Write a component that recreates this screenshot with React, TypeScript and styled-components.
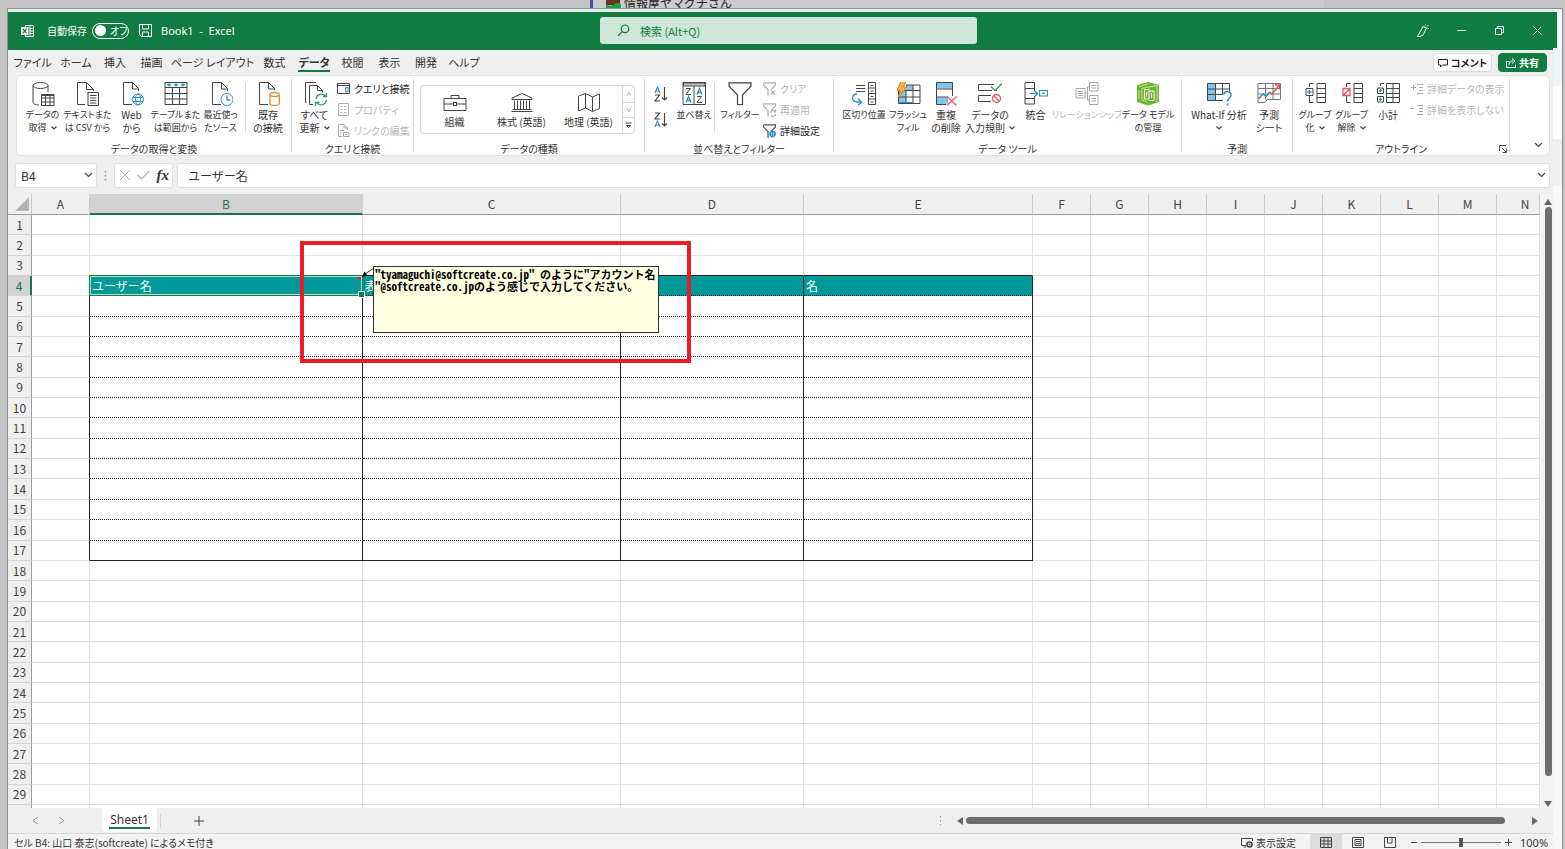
import React from "react";
import styled, { createGlobalStyle } from "styled-components";

const GREEN = "#107c41";
const INK = "#444";
const BLUE = "#2b8fd0";
const SKY = "#83c3f0";

const GlobalStyle = createGlobalStyle`
  * { box-sizing: border-box; }
  body { margin: 0; overflow: hidden; background: #c4c4c4; }
  button, input { font: inherit; color: inherit; margin: 0; padding: 0; border: 0; background: none; }
  button { white-space: nowrap; }
  svg { display: block; flex: none; }
`;

/* ---------- shell ---------- */

const Desktop = styled.div`
  height: 100vh;
  display: flex;
  flex-direction: column;
  padding: 0 2px 0 7px;
  background: #c4c4c4;
  color: #333;
  font-family: "Noto Sans CJK JP", "Noto Sans", sans-serif;
  font-size: 10px;
`;
const Behind = styled.div`
  flex: none;
  height: 8px;
  display: grid;
  grid-template-columns: 583px minmax(0, 1fr) 239px;
`;
const BehindPage = styled.div`
  display: flex;
  align-items: flex-end;
  gap: 3px;
  padding-left: 13px;
  overflow: hidden;
  border-left: 3px solid #4b4bb8;
  background: #cbcbcb;
  color: #222;
  font-size: 12px;
  line-height: 10px;
  white-space: nowrap;
`;
const Window = styled.div`
  flex: 1;
  min-height: 0;
  display: flex;
  border: 1px solid #8f8f8f;
  border-bottom: 0;
  background: #efefef;
`;
const Main = styled.div`
  flex: 1;
  min-width: 0;
  display: flex;
  flex-direction: column;
  border-top: 3px solid #e4f0e9;
`;
const Edge = styled.div`
  width: 9px;
  flex: none;
  background: #f8f8f8;
  border-top: 3px solid #f0f5f8;
`;
const EdgePart = styled.div<{ $h: number; $bg: string; $w?: number }>`
  height: ${(p) => p.$h}px;
  width: ${(p) => (p.$w ? p.$w + "px" : "100%")};
  background: ${(p) => p.$bg};
`;

/* ---------- title bar ---------- */

const TitleBar = styled.header`
  flex: none;
  height: 38px;
  display: grid;
  grid-template-columns: 592px 377px minmax(0, 1fr);
  align-items: center;
  padding-bottom: 1px;
  background: ${GREEN};
  color: #fff;
`;
const TitleLeft = styled.div`
  display: flex;
  align-items: center;
  padding-left: 13px;
  white-space: pre;
`;
const AutoSave = styled.label`
  display: flex;
  align-items: center;
  gap: 5px;
  margin: 0 10px 0 12px;
  position: relative;
  input { position: absolute; right: 0; width: 37px; height: 16px; opacity: 0; }
`;
const Switch = styled.span`
  display: flex;
  align-items: center;
  gap: 4px;
  width: 37px;
  height: 16px;
  padding-left: 2px;
  border: 1px solid #fff;
  border-radius: 8px;
  font-feature-settings: "palt";
  line-height: 14px;
  &::before { content: ""; width: 11px; height: 11px; border-radius: 50%; background: #fff; }
`;
const BookName = styled.span`
  margin-left: 9px;
  font-family: "Noto Sans", sans-serif;
  font-size: 11px;
`;
const SearchBox = styled.label`
  height: 27px;
  display: flex;
  align-items: center;
  gap: 10px;
  padding-left: 17px;
  border-radius: 3px;
  background: #cfe6da;
  color: ${GREEN};
  input { flex: 1; min-width: 0; outline: 0; font-size: 11px; }
  input::placeholder { color: ${GREEN}; opacity: 1; }
`;
const WindowButtons = styled.div`
  display: flex;
  justify-content: flex-end;
  margin-right: -3px;
  button { width: 38px; height: 37px; display: grid; place-items: center; }
`;

/* ---------- tabs ---------- */

const TabRow = styled.nav`
  flex: none;
  height: 25px;
  display: flex;
  align-items: center;
  padding: 0 6px 0 2px;
  font-size: 11px;
  font-feature-settings: "palt";
`;
const Tab = styled.button<{ $w: number; $on?: boolean }>`
  width: ${(p) => p.$w}px;
  height: 22px;
  display: flex;
  justify-content: center;
  font-weight: ${(p) => (p.$on ? 700 : 400)};
  span {
    height: 20px;
    line-height: 20px;
    border-bottom: ${(p) => (p.$on ? "2px solid " + GREEN : "0")};
  }
`;
const TabAction = styled.button<{ $primary?: boolean }>`
  height: 19px;
  width: ${(p) => (p.$primary ? 49 : 59)}px;
  margin-left: ${(p) => (p.$primary ? "6px" : "auto")};
  display: flex;
  align-items: center;
  justify-content: center;
  gap: 3px;
  border: 1px solid ${(p) => (p.$primary ? GREEN : "#dcdcdc")};
  border-radius: 4px;
  background: ${(p) => (p.$primary ? GREEN : "#fff")};
  color: ${(p) => (p.$primary ? "#fff" : "#222")};
  font-size: 10px;
  font-weight: 700;
`;

/* ---------- ribbon ---------- */

const Ribbon = styled.section`
  flex: none;
  height: 81px;
  display: flex;
  margin: 0 3px 0 8px;
  padding: 3px 0;
  border: 1px solid #e2e2e2;
  border-radius: 6px;
  background: #fff;
  font-feature-settings: "palt";
`;
const Group = styled.div<{ $w: number }>`
  width: ${(p) => p.$w}px;
  flex: none;
  display: flex;
  flex-direction: column;
  position: relative;
  border-right: 1px solid #d6d6d6;
`;
const GroupBody = styled.div<{ $pad: number }>`
  flex: 1;
  min-height: 0;
  display: flex;
  align-items: flex-start;
  padding-left: ${(p) => p.$pad}px;
  padding-top: 3px;
`;
const GroupTitle = styled.div`
  flex: none;
  height: 13px;
  margin-bottom: -3px;
  line-height: 13px;
  text-align: center;
  white-space: nowrap;
`;
const Big = styled.button<{ $w: number; $off?: boolean; $dense?: boolean }>`
  width: ${(p) => p.$w}px;
  flex: none;
  display: flex;
  flex-direction: column;
  align-items: center;
  gap: 2px;
  font-size: ${(p) => (p.$dense ? 9 : 10)}px;
  line-height: 13px;
  color: ${(p) => (p.$off ? "#b8b8b8" : "inherit")};
`;
const BigLine = styled.span`
  min-height: 13px;
  display: flex;
  align-items: center;
  justify-content: center;
  gap: 4px;
`;
const Rule = styled.div`
  width: 1px;
  height: 50px;
  margin: 0 2px;
  background: #d9d9d9;
`;
const SmallList = styled.div<{ $gap?: number }>`
  display: flex;
  flex-direction: column;
  margin-top: -1px;
  margin-left: ${(p) => p.$gap ?? 0}px;
`;
const Small = styled.button<{ $off?: boolean }>`
  height: 21px;
  flex: none;
  display: flex;
  align-items: center;
  gap: 4px;
  padding-bottom: 6px;
  color: ${(p) => (p.$off ? "#b8b8b8" : "#222")};
`;
const Gallery = styled.div`
  width: 215px;
  height: 49px;
  display: flex;
  margin-top: 3px;
  border: 1px solid #d6d6d6;
  border-radius: 4px;
`;
const GalleryItem = styled.button`
  width: 67px;
  display: flex;
  flex-direction: column;
  align-items: center;
  gap: 3px;
  padding-top: 6px;
  line-height: 13px;
`;
const GalleryScroll = styled.div`
  flex: 1;
  display: grid;
  grid-template-rows: 1fr 1fr 1fr;
  border-left: 1px solid #d6d6d6;
  button { display: grid; place-items: center; }
  button + button { border-top: 1px solid #d6d6d6; }
`;
const SortColumn = styled.div`
  width: 30px;
  display: flex;
  flex-direction: column;
  align-items: center;
  gap: 10px;
  padding-top: 4px;
`;
const Launcher = styled.button`
  position: absolute;
  right: 2px;
  bottom: -1px;
`;
const Collapse = styled.button`
  margin: auto 6px 4px auto;
`;

/* ---------- formula bar ---------- */

const FormulaRow = styled.div`
  flex: none;
  height: 38px;
  display: flex;
  align-items: center;
  padding: 0 3px 0 7px;
`;
const Field = styled.div<{ $w?: number }>`
  width: ${(p) => (p.$w ? p.$w + "px" : "auto")};
  flex: ${(p) => (p.$w ? "none" : "1")};
  height: 25px;
  display: flex;
  align-items: center;
  justify-content: space-between;
  padding: 0 3px 0 5px;
  border: 1px solid #e0e0e0;
  border-radius: 3px;
  background: #fff;
  font-size: 12px;
  input { flex: 1; min-width: 0; outline: 0; }
`;
const FormulaInput = styled.input`
  padding-left: 5px;
`;
const Dots = styled.div`
  width: 17px;
  display: grid;
  place-items: center;
`;
const FieldGap = styled.div`
  width: 4px;
`;
const Fx = styled.span`
  font-family: "Liberation Serif", serif;
  font-style: italic;
  font-weight: 700;
  font-size: 15px;
`;

/* ---------- grid ---------- */

const GridArea = styled.div`
  flex: 1;
  min-height: 0;
  display: flex;
`;
const TableWrap = styled.div`
  flex: 1;
  min-width: 0;
`;
const Sheet = styled.table`
  width: 100%;
  height: 100%;
  table-layout: fixed;
  border-collapse: separate;
  border-spacing: 0;
  background: #fff;
  font-size: 12px;
  line-height: 12px;
  th, td { padding: 0; font-weight: 400; }
  th:last-child { padding-left: 14px; }
`;
const ColHead = styled.th<{ $on?: boolean }>`
  height: 21px;
  background: ${(p) => (p.$on ? "#d2d2d2" : "#efefef")};
  color: ${(p) => (p.$on ? "#217346" : "#444")};
  border-right: 1px solid ${(p) => (p.$on ? "#d2d2d2" : "#c9c9c9")};
  border-bottom: ${(p) => (p.$on ? "2px solid #217346" : "1px solid #9b9b9b")};
  svg { margin: 0 2px 0 auto; }
`;
const RowHead = styled.th<{ $on?: boolean }>`
  background: ${(p) => (p.$on ? "#d2d2d2" : "#efefef")};
  color: ${(p) => (p.$on ? "#217346" : "#444")};
  border-right: ${(p) => (p.$on ? "2px solid #217346" : "1px solid #9b9b9b")};
  border-bottom: 1px solid #d4d4d4;
`;
const Cell = styled.td<{ $right: string; $bottom: string; $teal?: boolean }>`
  position: relative;
  border-right: 1px solid ${(p) => p.$right};
  border-bottom: ${(p) => p.$bottom};
  background: ${(p) => (p.$teal ? "#009999" : "transparent")};
  color: #fff;
  text-indent: 2px;
  white-space: nowrap;
`;
const Sliver = styled.tr`
  height: 3px;
  line-height: 0;
  th { height: 3px; border-bottom: 0; }
  td { height: 3px; border-bottom: 0; }
`;
const Selection = styled.div`
  position: absolute;
  inset: -1px;
  z-index: 1;
  border: 1px solid ${GREEN};
  box-shadow: inset 0 0 0 1px #b9dccb;
  &::before {
    content: "";
    position: absolute;
    right: 1px;
    top: 1px;
    border-top: 4px solid #e02020;
    border-left: 4px solid transparent;
  }
  &::after {
    content: "";
    position: absolute;
    right: -2px;
    bottom: -2px;
    width: 5px;
    height: 5px;
    background: ${GREEN};
    box-shadow: 0 0 0 1px #fff;
  }
`;
const Note = styled.div`
  position: absolute;
  z-index: 3;
  left: calc(100% + 11px);
  top: -10px;
  width: 286px;
  height: 67px;
  padding: 1px;
  border: 1px solid #333;
  background: #ffffe1;
  color: #000;
  font-size: 11px;
  font-weight: 700;
  line-height: 12px;
  text-indent: 0;
  font-feature-settings: "hwid";
`;
const NoteArrow = styled.svg`
  position: absolute;
  z-index: 3;
  left: 100%;
  top: -9px;
`;
const RedFrame = styled.div`
  position: absolute;
  z-index: 4;
  right: -329px;
  top: -35px;
  width: 391px;
  height: 122px;
  border: 4px solid #ed1c24;
`;
const VScroll = styled.div`
  width: 13px;
  flex: none;
  display: flex;
  flex-direction: column;
  align-items: center;
  gap: 2px;
  padding: 5px 0 1px 3px;
  background: #f3f3f3;
`;
const VThumb = styled.div`
  flex: 1;
  width: 7px;
  margin-bottom: 23px;
  border-radius: 4px;
  background: #6e6e6e;
`;

/* ---------- sheet bar and status bar ---------- */

const SheetBar = styled.div`
  flex: none;
  height: 26px;
  display: flex;
  align-items: center;
  padding-left: 24px;
  border-bottom: 1px solid #d8d8d8;
  background: #efefef;
`;
const NextSheet = styled.button`
  margin-left: 19px;
`;
const SheetTab = styled.button`
  width: 55px;
  height: 24px;
  margin: 0 3px 2px 37px;
  display: flex;
  justify-content: center;
  border-radius: 0 0 4px 4px;
  background: #fff;
  font-family: "Noto Sans", sans-serif;
  font-size: 12px;
  span { height: 21px; line-height: 23px; border-bottom: 2px solid #217346; padding: 0 1px; }
`;
const SheetRule = styled.div`
  width: 1px;
  height: 14px;
  background: #d4d4d4;
`;
const AddSheet = styled.button`
  margin-left: 33px;
`;
const HScroll = styled.div`
  width: 614px;
  margin-left: auto;
  padding-right: 15px;
  display: flex;
  align-items: center;
`;
const ScrollLeft = styled.span`
  margin-left: 15px;
`;
const HThumb = styled.div`
  flex: 1;
  height: 7px;
  margin: 0 27px 0 3px;
  border-radius: 4px;
  background: #6e6e6e;
`;
const Status = styled.footer`
  flex: none;
  height: 15px;
  display: flex;
  align-items: center;
  padding: 2px 0 0 6px;
  background: #f3f3f3;
  font-feature-settings: "palt";
  white-space: nowrap;
`;
const StatusText = styled.span`
  flex: 1;
  line-height: 13px;
`;
const Display = styled.button`
  display: flex;
  align-items: center;
  gap: 3px;
  margin-right: 14px;
  line-height: 13px;
`;
const View = styled.button<{ $on?: boolean }>`
  width: 32px;
  height: 15px;
  margin-top: -2px;
  padding-top: 2px;
  display: grid;
  place-items: center;
  background: ${(p) => (p.$on ? "#dcdcdc" : "transparent")};
`;
const Zoom = styled.div`
  display: flex;
  align-items: center;
  gap: 4px;
  margin-left: 5px;
  font-family: "Noto Sans", sans-serif;
  input {
    appearance: none;
    width: 80px;
    height: 10px;
    background: linear-gradient(#777, #777) center / 100% 1px no-repeat;
  }
  input::-webkit-slider-thumb { appearance: none; width: 4px; height: 9px; background: #555; }
`;
const Percent = styled.span`
  width: 33px;
  margin-left: 4px;
  font-size: 11px;
  line-height: 13px;
`;

/* ---------- icons ---------- */

type IconProps = { children: React.ReactNode; w?: number; h?: number; color?: string };
const Icon = ({ children, w = 24, h = 24, color = INK }: IconProps) => (
  <svg width={w} height={h} viewBox={`0 0 ${w} ${h}`} fill="none" stroke={color} strokeWidth="1" aria-hidden="true">
    {children}
  </svg>
);

const Chevron = ({ w = 9, color = INK, up = false }: { w?: number; color?: string; up?: boolean }) => (
  <Icon w={w} h={6} color={color}>
    <path d={up ? `M1 4.5 L${w / 2} 1.5 L${w - 1} 4.5` : `M1 1 L${w / 2} 4.5 L${w - 1} 1`} strokeWidth="1.2" />
  </Icon>
);
const SmallChevron = () => (
  <Icon w={6} h={4}><path d="M.5 .5 3 3 5.5 .5" strokeWidth="1.2" /></Icon>
);

const IconDatabase = () => (
  <Icon>
    <ellipse cx="9.500" cy="3.500" rx="7.500" ry="3" />
    <path d="M2 3.500V20.500C2 22 5 23 8 23M17 3.500V10" />
    <path d="M10.500 12.500H23V23.500H10.500ZM10.500 16H23M10.500 20H23M14.500 12.500V23.500M19 12.500V23.500" />
    <path d="M10.500 13H23" strokeWidth="2" />
  </Icon>
);
const IconTextDoc = () => (
  <Icon>
    <path d="M10.500 .5H1.500V22.500H9M10.500 .5 17.500 7.500V9M10.500 .5V7.500H17.500" />
    <path d="M12 10.500H22.500V23.500H12ZM14 13.500H20.500M14 16H20.500M14 18.500H20.500M14 21H20.500" />
  </Icon>
);
const IconWebDoc = () => (
  <Icon>
    <path d="M12.500 .5H3.500V22.500H12M12.500 .5 18.500 6.500V9M12.500 .5V7H18.500" />
    <g stroke={BLUE}>
      <circle cx="18" cy="17.500" r="5.500" />
      <ellipse cx="18" cy="17.500" rx="2.500" ry="5.500" />
      <path d="M13 15.500H23M13 19.500H23" />
    </g>
  </Icon>
);
const IconTableRange = () => (
  <Icon>
    <path d="M1.500 1H22.500V5H1.500Z" fill="#e9f3fb" stroke="none" />
    <path d="M1 .5H23V22.500H1ZM1 5.500H23M1 11.500H23M1 17H23M8.500 5V22.500M15.500 5V22.500" />
    <path d="M3 2H7L5 4.500ZM10 2H14L12 4.500ZM17 2H21L19 4.500Z" fill={BLUE} stroke={BLUE} strokeWidth=".5" />
  </Icon>
);
const IconRecent = () => (
  <Icon>
    <path d="M12.500 .5H3.500V22.500H12M12.500 .5 18.500 6.500V9M12.500 .5V7H18.500" />
    <circle cx="18" cy="17.500" r="6" stroke={BLUE} fill="#fff" />
    <path d="M18 13.500V18H21.500" />
  </Icon>
);
const IconExisting = () => (
  <Icon>
    <path d="M12.500 .5H3.500V22.500H12M12.500 .5 18.500 6.500V8M12.500 .5V7H18.500" />
    <g stroke="#ec8a2e" strokeWidth="1.300">
      <path d="M14 13V21.500C14 24 23.300 24 23.300 21.500V13" fill="#fff" />
      <ellipse cx="18.600" cy="12.500" rx="4.600" ry="2" fill="#fff" />
    </g>
  </Icon>
);
const IconRefresh = () => (
  <Icon w={26}>
    <path d="M4.500 20.500H3.500V.5H14M7.500 22.500V3.500H15.500M7.500 22.500H11M15.500 3.500 20.500 8.500H15.500ZM20.500 8.500V10.500" />
    <g stroke="#2aa35a" strokeWidth="1.300">
      <path d="M14 17A5.500 5.500 0 0 1 23.500 14M24.500 11V14.500H21M24.500 18A5.500 5.500 0 0 1 15 21M13.500 24V20.500H17.500" />
    </g>
  </Icon>
);
const IconQueries = () => (
  <Icon w={13} h={13}>
    <path d="M.5 1.500H12.500V11.500H.5ZM.5 3.500H12.500" />
    <path d="M8.500 5.500H11V10H8.500Z" stroke={BLUE} fill="#d9ecf9" />
  </Icon>
);
const IconProperties = () => (
  <Icon w={13} h={13} color="#b0b0b0">
    <path d="M1.500 .5H11.500V12.500H1.500ZM3.500 3.500H5.500M3.500 6.500H5.500M3.500 9.500H5.500M7 3.500H9.500M7 6.500H9.500M7 9.500H9.500" />
  </Icon>
);
const IconLinks = () => (
  <Icon w={13} h={13} color="#a8a8a8">
    <path d="M7 .5H1.500V12.500H5M7 .5 10.500 4V6M7 .5V4H10.500M3 6.500H7M3 9H5" />
    <path d="M6.500 8.500H12V12.500H6.500ZM8 10.500H10.500" />
  </Icon>
);
const IconOrg = () => (
  <Icon w={24} h={20}>
    <path d="M1 6.500H23V18.500H1ZM8 6.500V3.500H16V6.500M1 12H10M14 12H23" />
    <rect x="10.500" y="10.500" width="3" height="3" />
  </Icon>
);
const IconStock = () => (
  <Icon w={24} h={20}>
    <path d="M2 7.500V6L12 1.500 22 6V7.500ZM1.500 19.500H22.500M2.500 17.500H21.500M4.500 8.500V17M7.500 8.500V17M10.500 8.500V17M13.500 8.500V17M16.500 8.500V17M19.500 8.500V17" />
  </Icon>
);
const IconMap = () => (
  <Icon w={24} h={20}>
    <path d="M1.500 4 8.500 1.500 15.500 5 22.500 2V16.500L15.500 19.500 8.500 16 1.500 19ZM8.500 1.500V16M15.500 5V19.500" />
  </Icon>
);
const RISING = "M0 6 L2.500 0 L5 6 M1 4 H4";
const ZIGZAG = "M0 0 H4.500 L0 6 H5";
const IconSort = ({ desc = false }: { desc?: boolean }) => (
  <Icon w={14} h={16}>
    <g strokeWidth="1.200">
      <path d={desc ? ZIGZAG : RISING} transform="translate(1 1)" stroke={desc ? INK : BLUE} />
      <path d={desc ? RISING : ZIGZAG} transform="translate(1 9)" stroke={desc ? BLUE : INK} />
      <path d="M10.500 1V14M8 11.500 10.500 14 13 11.500" />
    </g>
  </Icon>
);
const IconSortDialog = () => (
  <Icon>
    <path d="M1 .5H23.500V22.500H1ZM12 4V22.500" />
    <path d="M1.500 1H23V4H1.500Z" fill="#c9c9c9" />
    <path d={ZIGZAG} transform="translate(4 6.500)" />
    <path d={RISING} transform="translate(4 14.500)" stroke={BLUE} strokeWidth="1.300" />
    <path d={RISING} transform="translate(15 6.500)" stroke={BLUE} strokeWidth="1.300" />
    <path d={ZIGZAG} transform="translate(15 14.500)" />
  </Icon>
);
const IconFilter = () => (
  <Icon><path d="M1 .8H23V4L14.500 13V22.500H9.500V13L1 4Z" strokeWidth="1.200" /></Icon>
);
const IconMiniFilter = ({ kind }: { kind: "clear" | "again" | "more" }) => (
  <Icon w={13} h={14} color={kind === "more" ? "#555" : "#b0b0b0"}>
    <path d="M.5 .8H12.500V3L8 7.500M.5 .8V3L5 7.500V13H6" strokeWidth="1.200" />
    {kind === "clear" && <path d="M8 8.500 12 12.500M12 8.500 8 12.500" strokeWidth="1.200" />}
    {kind === "again" && <path d="M7.500 10A2.600 2.600 0 0 1 12.500 9M12.500 11A2.600 2.600 0 0 1 8 12.500M12.500 6.500V9H10.500" strokeWidth="1.200" />}
    {kind === "more" && (
      <g stroke={BLUE}><circle cx="9.500" cy="10" r="2.500" strokeWidth="1.500" /><path d="M9.500 6.500V13.500M6 10H13" /></g>
    )}
  </Icon>
);
const IconTextToCols = () => (
  <Icon>
    <path d="M4 3.500H13M4 6.500H13M4 9.500H13M16.500 .5H23.500V22.500H16.500ZM16.500 6H23.500M16.500 11.500H23.500M16.500 17H23.500" />
    <path d="M18.500 3.500H21.500M18.500 9H21.500M18.500 14.500H21.500M18.500 20H21.500" />
    <path d="M5 12C-.5 12 -1 20 5 20H9M6 16.500 9.500 20 6 23.500" stroke={BLUE} strokeWidth="1.300" />
  </Icon>
);
const IconFlash = () => (
  <Icon w={26}>
    <path d="M11 3H18V8.500H11ZM4 9H11V21H4Z" fill={SKY} stroke="none" />
    <path d="M3.500 9V21.500H25V3H11M3.500 15H25M8 8.500H25M11 9V21.500M18 3V21.500" />
    <path d="M4.500 20.500H17.500" stroke={BLUE} />
    <path d="M6-.5H11L8 5H12L3 15.500 5.500 8.500H2Z" fill="#fbb04a" stroke="#e07b1c" />
  </Icon>
);
const IconDup = () => (
  <Icon>
    <path d="M3 .5H18.500V6.500H3ZM3 15.500H14V22.500H3Z" fill={SKY} stroke="none" />
    <path d="M18.500 14V.5H2.500V22.500H12M2.500 7H18.500M2.500 15H14" />
    <path d="M13 14.500 22.500 23.500M22.500 14.500 13 23.500" stroke="#ef6a70" strokeWidth="1.500" />
  </Icon>
);
const IconValidate = () => (
  <Icon>
    <path d="M16 2.500H.5V8.500H14M13 13.500H.5V19.500H13M17 8.500H19" />
    <path d="M13 4.500 17 8.500 24 1.500" stroke="#2aa35a" strokeWidth="1.300" />
    <g stroke="#ea5a63" strokeWidth="1.400"><circle cx="18.500" cy="16.500" r="4" /><path d="M15.700 13.700 21.300 19.300" /></g>
  </Icon>
);
const IconConsolidate = () => (
  <Icon>
    <path d="M1 .5H10.500V6.500H1ZM1 6.500V16.500H10.500M1 16.500V22H10.500V16.500M10.500 6.500V9M10.500 14V16.500" />
    <path d="M5.500 11.500H13.500M10.500 8.500 13.500 11.500 10.500 14.500M15.500 8.500H23.500V14H15.500ZM18 11.200H21" stroke={BLUE} strokeWidth="1.200" />
  </Icon>
);
const IconRelation = () => (
  <Icon color="#a9a9a9">
    <path d="M1 6.500H10V16H1ZM14.500 .5H23V9H14.500ZM14.500 13.500H23V22.500H14.500ZM10 11H12.500M12.500 11V5H14.500M12.500 11V18H14.500" />
    <path d="M3 9.500H8M3 11.500H8M3 13.500H8M16.500 3.500H21M16.500 6H21M16.500 16.500H21M16.500 19H21" />
  </Icon>
);
const IconModel = () => (
  <Icon>
    <path d="M12 0 23 3V20L12 23.500 1 20V3Z" fill="#6fb52c" stroke="none" />
    <path d="M3 5 11 2M3 8V17M5.500 6.500 21 3.500V20M6 7.500V18L11 20" stroke="#c9e8a8" />
    <path d="M8.500 7.500H13V17H8.500ZM13 9H18V18.500H13M10.500 10V14.500M15.500 11V16" stroke="#fff" />
  </Icon>
);
const IconWhatIf = () => (
  <Icon w={26}>
    <path d="M2 1.500H9.500V18.500H2Z" fill={SKY} stroke="none" />
    <path d="M17 18.500H1.500V1.500H23.500V9M1.500 7H23.500M1.500 12.500H17M9.500 1.500V18.500M16.500 1.500V12" />
    <path d="M18 12.500C18 8.500 25 8.500 25 13 25 16 21.500 16 21.500 19.500M21.500 21.500V23.500" stroke={BLUE} strokeWidth="1.600" />
  </Icon>
);
const IconForecast = () => (
  <Icon>
    <path d="M1 1.500H23.500V17.500H10L8 20.500H1ZM1 6.500H23.500M1 12H23.500M8.500 1.500V17.500M16 1.500V17.500" stroke="#777" />
    <path d="M1.500 17 6 12 9 14.500 12.500 10" stroke={BLUE} strokeWidth="1.400" />
    <path d="M12.500 10 15 12 22 3.500M18 3H22.500V7.500" stroke="#e8555d" strokeWidth="1.400" />
  </Icon>
);
const IconGroup = ({ off = false }: { off?: boolean }) => (
  <Icon>
    <path d="M14 1.500H22.500V20.500H14ZM14 6.500H22.500M14 11.500H22.500M14 15.500H22.500M10.500 1.500H6.500V5M6.500 14V20.500H10.500" />
    {off ? (
      <path d="M3 6.500H10V13.500H3ZM3 13.500 10 6.500" stroke="#e8555d" strokeWidth="1.300" />
    ) : (
      <><path d="M3 6.500H10V13.500H3Z" /><path d="M6.500 8V12M4.500 10H8.500" stroke={BLUE} strokeWidth="1.300" /></>
    )}
  </Icon>
);
const IconSubtotal = () => (
  <Icon>
    <path d="M10.500 1.500H23.500V20.500H10.500ZM10.500 6.500H23.500M10.500 11.500H23.500M10.500 15.500H23.500M17 1.500V20.500M8 1.500H4.500V4" />
    <path d="M1.500 6H7.500V11.500H1.500ZM1.500 14.500H7.500V20H1.500Z" />
    <path d="M4.500 7V10.500M3 8.700H6M4.500 15.500V19M3 17.300H6" stroke={BLUE} strokeWidth="1.300" />
  </Icon>
);
const IconDetail = ({ minus = false }: { minus?: boolean }) => (
  <Icon w={12} h={12} color="#a9a9a9">
    <path d={minus ? "M0 4.500H3" : "M0 4.500H5M2.500 2V7"} />
    <path d="M6 1.500H12M8 4.500H12M8 7.500H12M6 10.500H12" />
  </Icon>
);
const Triangle = ({ d, w = 8, h = 8 }: { d: string; w?: number; h?: number }) => (
  <Icon w={w} h={h} color="none"><path d={d} fill="#666" /></Icon>
);

/* ---------- data ---------- */

const TABS: [string, number][] = [
  ["ファイル", 45], ["ホーム", 42], ["挿入", 36], ["描画", 37], ["ページ レイアウト", 85], ["数式", 39],
  ["データ", 40], ["校閲", 37], ["表示", 37], ["開発", 36], ["ヘルプ", 40],
];
const COLUMNS: [string, number | undefined][] = [
  ["A", 58], ["B", 273], ["C", 258], ["D", 183], ["E", 229], ["F", 58], ["G", 58], ["H", 58],
  ["I", 58], ["J", 58], ["K", 58], ["L", 58], ["M", 58], ["N", undefined],
];
const HEADINGS: Record<string, string> = { B: "ユーザー名", C: "表", E: "名" };
const ROWS = Array.from({ length: 29 }, (_, i) => i + 1);

type BigProps = { w: number; icon: React.ReactNode; lines: string[]; menu?: boolean; off?: boolean; dense?: boolean };
const BigButton = ({ w, icon, lines, menu, off, dense }: BigProps) => (
  <Big $w={w} $off={off} $dense={dense} disabled={off}>
    {icon}
    <div>
      {lines.map((line, i) => (
        <BigLine key={i}>{line}{menu && i === lines.length - 1 && <SmallChevron />}</BigLine>
      ))}
    </div>
  </Big>
);

const GRIDLINE = "#e1e1e1";
const cellLook = (col: string, row: number) => {
  const inTable = row >= 4 && row <= 17;
  const data = "BCDE".includes(col);
  const right = inTable && (data || col === "A") ? "#222" : GRIDLINE;
  let bottom = `1px solid ${GRIDLINE}`;
  if (data && row === 3) bottom = "1px solid #222";
  if (data && inTable) bottom = row === 17 ? "1px solid #222" : "1px dotted #222";
  return { $right: right, $bottom: bottom, $teal: data && row === 4 };
};

const BodyRow = ({ row }: { row: number }) => (
  <tr>
    <RowHead scope="row" $on={row === 4}>{row}</RowHead>
    {COLUMNS.map(([col]) => (
      <Cell key={col} {...cellLook(col, row)}>
        {row === 4 && HEADINGS[col]}
        {row === 4 && col === "B" && (
          <>
            <Selection />
            <NoteArrow width="13" height="12" viewBox="0 0 13 12">
              <path d="M12 1 3 7" stroke="#333" fill="none" />
              <path d="M0 10 2.500 4.500 5.500 8.500Z" fill="#000" />
            </NoteArrow>
            <Note>
              "tyamaguchi@softcreate.co.jp" のように"アカウント名<br />
              "@softcreate.co.jpのよう感じで入力してください。
            </Note>
            <RedFrame />
          </>
        )}
      </Cell>
    ))}
  </tr>
);

export default function App() {
  return (
    <Desktop lang="ja">
      <GlobalStyle />
      <Behind>
        <div />
        <BehindPage>
          <Icon w={15} h={8} color="none">
            <path d="M0 0H14V5H0Z" fill="#6b3328" />
            <path d="M0 4Q4 7 8 4.500T15 4V8H0Z" fill="#17a34a" />
          </Icon>
          情報屋ヤマグチさん
        </BehindPage>
        <div />
      </Behind>
      <Window>
        <Main>
          <TitleBar>
            <TitleLeft>
              <Icon w={14} h={14} color="#fff">
                <path d="M4.500 3V1.500H12.500V12.500H4.500V11M8.500 4.500H12.500M8.500 7H12.500M8.500 9.500H12.500M9 1.500V12.500" />
                <path d="M0 3H7.500V11H0Z" fill="#fff" stroke="none" />
                <path d="M2 5 5.500 9M5.500 5 2 9" stroke={GREEN} strokeWidth="1.300" />
              </Icon>
              <AutoSave>
                自動保存
                <input type="checkbox" />
                <Switch>オフ</Switch>
              </AutoSave>
              <button aria-label="上書き保存">
                <Icon w={13} h={13} color="#fff">
                  <path d="M.5 .5H12.500V12.500H2.500L.5 10.500ZM3.500 .5V5H9.500V.5M3.500 12.500V8H9.500V12.500" />
                </Icon>
              </button>
              <BookName>Book1  -  Excel</BookName>
            </TitleLeft>
            <SearchBox>
              <Icon w={13} h={13} color={GREEN}>
                <circle cx="8" cy="4.800" r="3.800" strokeWidth="1.200" />
                <path d="M5.200 7.600 1 12" strokeWidth="1.200" />
              </Icon>
              <input type="search" placeholder="検索 (Alt+Q)" aria-label="検索" />
            </SearchBox>
            <WindowButtons>
              <button aria-label="描画">
                <Icon w={14} h={14} color="#fff">
                  <path d="M1.500 12.500 7 2.500 10.500 4 7 11 4 12.500ZM1.500 12.500H5M9 1.500 9.500 .5M11 2.500 12.500 1M11.500 4.500H13" />
                </Icon>
              </button>
              <button aria-label="最小化"><Icon w={9} h={9} color="#dcefe4"><path d="M0 4.500H9" /></Icon></button>
              <button aria-label="元に戻す">
                <Icon w={9} h={9} color="#fff"><path d="M.5 2.500H6.500V8.500H.5ZM2.500 2V.5H8.500V6.500H7" /></Icon>
              </button>
              <button aria-label="閉じる"><Icon w={9} h={9} color="#fff"><path d="M.5 .5 8.500 8.500M8.500 .5 .5 8.500" /></Icon></button>
            </WindowButtons>
          </TitleBar>

          <TabRow>
            {TABS.map(([name, w]) => (
              <Tab key={name} $w={w} $on={name === "データ"}><span>{name}</span></Tab>
            ))}
            <TabAction>
              <Icon w={10} h={10} color="#222"><path d="M.5 1.500H9.500V7H4.500L2.500 9V7H.5Z" /></Icon>
              コメント
            </TabAction>
            <TabAction $primary>
              <Icon w={10} h={10} color="#fff"><path d="M3.500 3.500H.5V9.500H9.500V6.500M3 7C3 4 5 2.800 7 2.800M6 .5 9 3 6 5.500" /></Icon>
              共有
            </TabAction>
          </TabRow>

          <Ribbon>
            <Group $w={275}>
              <GroupBody $pad={3}>
                <BigButton w={45} icon={<IconDatabase />} lines={["データの", "取得"]} menu dense />
                <BigButton w={45} icon={<IconTextDoc />} lines={["テキストまた", "は CSV から"]} dense />
                <BigButton w={43} icon={<IconWebDoc />} lines={["Web", "から"]} />
                <BigButton w={45} icon={<IconTableRange />} lines={["テーブルまた", "は範囲から"]} dense />
                <BigButton w={45} icon={<IconRecent />} lines={["最近使っ", "たソース"]} dense />
                <Rule />
                <BigButton w={40} icon={<IconExisting />} lines={["既存", "の接続"]} />
              </GroupBody>
              <GroupTitle>データの取得と変換</GroupTitle>
            </Group>
            <Group $w={122}>
              <GroupBody $pad={0}>
                <BigButton w={45} icon={<IconRefresh />} lines={["すべて", "更新"]} menu />
                <SmallList>
                  <Small><IconQueries />クエリと接続</Small>
                  <Small $off disabled><IconProperties />プロパティ</Small>
                  <Small $off disabled><IconLinks />リンクの編集</Small>
                </SmallList>
              </GroupBody>
              <GroupTitle>クエリと接続</GroupTitle>
            </Group>
            <Group $w={231}>
              <GroupBody $pad={6}>
                <Gallery>
                  <GalleryItem><IconOrg />組織</GalleryItem>
                  <GalleryItem><IconStock />株式 (英語)</GalleryItem>
                  <GalleryItem><IconMap />地理 (英語)</GalleryItem>
                  <GalleryScroll>
                    <button aria-label="前へ"><Chevron w={6} color="#bbb" up /></button>
                    <button aria-label="次へ"><Chevron w={6} color="#bbb" /></button>
                    <button aria-label="その他"><Icon w={7} h={7}><path d="M.5 1H6.500M1.500 3.500 3.500 5.500 5.500 3.500Z" /></Icon></button>
                  </GalleryScroll>
                </Gallery>
              </GroupBody>
              <GroupTitle>データの種類</GroupTitle>
            </Group>
            <Group $w={189}>
              <GroupBody $pad={1}>
                <SortColumn>
                  <button aria-label="昇順"><IconSort /></button>
                  <button aria-label="降順"><IconSort desc /></button>
                </SortColumn>
                <BigButton w={36} icon={<IconSortDialog />} lines={["並べ替え"]} dense />
                <Rule />
                <BigButton w={46} icon={<IconFilter />} lines={["フィルター"]} dense />
                <SmallList>
                  <Small $off disabled><IconMiniFilter kind="clear" />クリア</Small>
                  <Small $off disabled><IconMiniFilter kind="again" />再適用</Small>
                  <Small><IconMiniFilter kind="more" />詳細設定</Small>
                </SmallList>
              </GroupBody>
              <GroupTitle>並べ替えとフィルター</GroupTitle>
            </Group>
            <Group $w={348}>
              <GroupBody $pad={8}>
                <BigButton w={44} icon={<IconTextToCols />} lines={["区切り位置"]} dense />
                <BigButton w={44} icon={<IconFlash />} lines={["フラッシュ", "フィル"]} dense />
                <BigButton w={32} icon={<IconDup />} lines={["重複", "の削除"]} />
                <BigButton w={56} icon={<IconValidate />} lines={["データの", "入力規則"]} menu />
                <BigButton w={35} icon={<IconConsolidate />} lines={["統合"]} />
                <BigButton w={68} icon={<IconRelation />} lines={["リレーションシップ"]} off dense />
                <BigButton w={54} icon={<IconModel />} lines={["データ モデル", "の管理"]} dense />
              </GroupBody>
              <GroupTitle>データ ツール</GroupTitle>
            </Group>
            <Group $w={111}>
              <GroupBody $pad={6}>
                <BigButton w={62} icon={<IconWhatIf />} lines={["What-If 分析", ""]} menu />
                <BigButton w={38} icon={<IconForecast />} lines={["予測", "シート"]} />
              </GroupBody>
              <GroupTitle>予測</GroupTitle>
            </Group>
            <Group $w={217}>
              <GroupBody $pad={4}>
                <BigButton w={36} icon={<IconGroup />} lines={["グループ", "化"]} menu dense />
                <BigButton w={37} icon={<IconGroup off />} lines={["グループ", "解除"]} menu dense />
                <BigButton w={36} icon={<IconSubtotal />} lines={["小計"]} />
                <SmallList $gap={5}>
                  <Small $off disabled><IconDetail />詳細データの表示</Small>
                  <Small $off disabled><IconDetail minus />詳細を表示しない</Small>
                </SmallList>
              </GroupBody>
              <GroupTitle>アウトライン</GroupTitle>
              <Launcher aria-label="アウトラインの設定">
                <Icon w={8} h={8}><path d="M.5 6V.5H7M3 3 7 7M7.500 3.500V7.500H3.500" /></Icon>
              </Launcher>
            </Group>
            <Collapse aria-label="リボンを折りたたむ"><Chevron /></Collapse>
          </Ribbon>

          <FormulaRow>
            <Field $w={82}>
              <input defaultValue="B4" aria-label="名前ボックス" />
              <Chevron />
            </Field>
            <Dots><Icon w={3} h={11} color="#999"><path d="M1.500 1V2.500M1.500 5V6.500M1.500 9V10.500" strokeWidth="1.500" /></Icon></Dots>
            <Field $w={59}>
              <Icon w={10} h={10} color="#b5b5b5"><path d="M0 0 10 10M10 0 0 10" /></Icon>
              <Icon w={13} h={10} color="#b5b5b5"><path d="M.5 5 4.500 9 12.500 1" strokeWidth="1.200" /></Icon>
              <Fx>fx</Fx>
            </Field>
            <FieldGap />
            <Field>
              <FormulaInput defaultValue="ユーザー名" aria-label="数式バー" />
              <Chevron />
            </Field>
          </FormulaRow>

          <GridArea>
            <TableWrap>
              <Sheet>
                <colgroup>
                  <col width={24} />
                  {COLUMNS.map(([col, w]) => <col key={col} width={w} />)}
                </colgroup>
                <thead>
                  <tr>
                    <ColHead aria-label="すべて選択">
                      <Icon w={14} h={14} color="none"><path d="M14 0V14H0Z" fill="#b4b4b4" /></Icon>
                    </ColHead>
                    {COLUMNS.map(([col]) => <ColHead key={col} scope="col" $on={col === "B"}>{col}</ColHead>)}
                  </tr>
                </thead>
                <tbody>
                  {ROWS.map((row) => <BodyRow key={row} row={row} />)}
                  <Sliver>
                    <RowHead />
                    {COLUMNS.map(([col]) => <Cell key={col} {...cellLook(col, 30)} />)}
                  </Sliver>
                </tbody>
              </Sheet>
            </TableWrap>
            <VScroll>
              <Triangle d="M4 0 8 6H0Z" h={6} />
              <VThumb />
              <Triangle d="M0 0H8L4 6Z" h={6} />
            </VScroll>
          </GridArea>

          <SheetBar>
            <button aria-label="前のシート"><Icon w={7} h={9} color="#999"><path d="M6 1 1 4.500 6 8" /></Icon></button>
            <NextSheet aria-label="次のシート"><Icon w={7} h={9} color="#999"><path d="M1 1 6 4.500 1 8" /></Icon></NextSheet>
            <SheetTab><span>Sheet1</span></SheetTab>
            <SheetRule />
            <AddSheet aria-label="新しいシート"><Icon w={10} h={10}><path d="M5 0V10M0 5H10" /></Icon></AddSheet>
            <HScroll>
              <Icon w={3} h={9} color="#999"><path d="M1.500 0V1.500M1.500 4V5.500M1.500 8V9" /></Icon>
              <ScrollLeft><Triangle d="M6 0V8L0 4Z" w={6} /></ScrollLeft>
              <HThumb />
              <Triangle d="M0 0 6 4 0 8Z" w={6} />
            </HScroll>
          </SheetBar>
          <Status>
            <StatusText>セル B4: 山口 泰志(softcreate) によるメモ付き</StatusText>
            <Display>
              <Icon w={12} h={11}><path d="M5 8.500H.5V1.500H11.500V4M2.500 10H5" /><circle cx="8.500" cy="7.500" r="2.500" strokeWidth="1.600" /><circle cx="8.500" cy="7.500" r=".5" /></Icon>
              表示設定
            </Display>
            <View $on aria-label="標準"><Icon w={12} h={11}><path d="M.5 .5H11.500V10.500H.5ZM.5 4H11.500M.5 7H11.500M4 .5V10.500M8 .5V10.500" /></Icon></View>
            <View aria-label="ページ レイアウト"><Icon w={12} h={11}><path d="M.5 .5H11.500V10.500H.5ZM3 2.500H9V8.500H3ZM4 4.500H8M4 6.500H8" /></Icon></View>
            <View aria-label="改ページ プレビュー"><Icon w={12} h={11}><path d="M.5 .5H11.500V10.500H.5ZM3.500 .5V6H8V.5" /></Icon></View>
            <Zoom>
              <Icon w={6} h={7}><path d="M0 3.500H6" /></Icon>
              <input type="range" min={0} max={100} defaultValue={50} aria-label="ズーム" />
              <Icon w={7} h={7}><path d="M3.500 0V7M0 3.500H7" /></Icon>
              <Percent>100%</Percent>
            </Zoom>
          </Status>
        </Main>
        <Edge>
          <EdgePart $h={36} $w={4} $bg={GREEN} />
          <EdgePart $h={38} $bg="#eef4f8" />
          <EdgePart $h={53} $bg="#fff" />
          <EdgePart $h={47} $bg="#efefef" />
        </Edge>
      </Window>
    </Desktop>
  );
}
